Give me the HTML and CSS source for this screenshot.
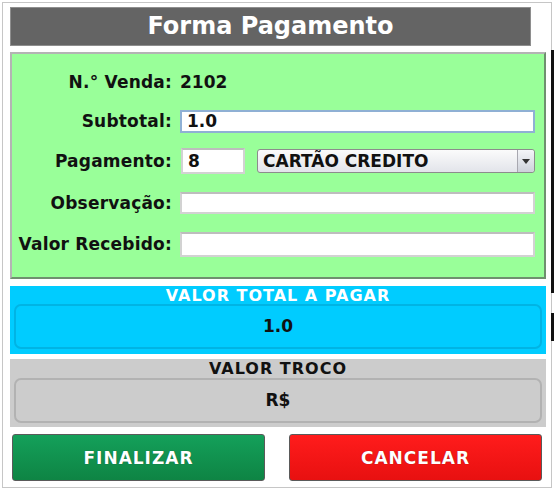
FILE: index.html
```html
<!DOCTYPE html>
<html lang="pt">
<head>
<meta charset="utf-8">
<title>Forma Pagamento</title>
<link rel="stylesheet" href="styles.css">
</head>
<body>
<div class="backdrop">
  <div class="behind behind-a"></div>
  <div class="behind behind-b"></div>
</div>
<div class="window">
  <div class="header">Forma Pagamento</div>

  <div class="form-panel">
    <div class="row">
      <span class="label">N.° Venda:</span>
      <span class="value">2102</span>
    </div>
    <div class="row">
      <span class="label">Subtotal:</span>
      <div class="field field-focus">1.0</div>
    </div>
    <div class="row">
      <span class="label">Pagamento:</span>
      <div class="field field-short">8</div>
      <div class="select">
        <span class="select-text">CARTÃO CREDITO</span>
        <span class="select-arrow">
          <svg width="8" height="5" viewBox="0 0 8 5"><path d="M0 0 L8 0 L4 5 Z" fill="#333"/></svg>
        </span>
      </div>
    </div>
    <div class="row">
      <span class="label">Observação:</span>
      <div class="field field-thin"></div>
    </div>
    <div class="row">
      <span class="label">Valor Recebido:</span>
      <div class="field"></div>
    </div>
  </div>

  <div class="total-panel total-blue">
    <div class="total-title">VALOR TOTAL A PAGAR</div>
    <div class="total-box">1.0</div>
  </div>

  <div class="total-panel total-gray">
    <div class="total-title">VALOR TROCO</div>
    <div class="total-box">R$</div>
  </div>

  <div class="actions">
    <button class="btn btn-ok">FINALIZAR</button>
    <button class="btn btn-cancel">CANCELAR</button>
  </div>
</div>
</body>
</html>
```

FILE: styles.css
```css
html, body {
  margin: 0;
  padding: 0;
  background: #ffffff;
}

body {
  width: 554px;
  height: 490px;
  overflow: hidden;
  font-family: "DejaVu Sans", "Liberation Sans", sans-serif;
  font-weight: bold;
  color: #111111;
  position: relative;
}

.backdrop {
  position: absolute;
  left: 551px;
  top: 0;
  width: 3px;
  height: 490px;
}

.behind {
  position: absolute;
  left: 0;
  width: 3px;
  background: #111111;
}

.behind-a { top: 50px; height: 243px; }
.behind-b { top: 313px; height: 28px; }

.window {
  margin: 2px 0 0 2px;
  width: 536px;
  height: 484px;
  border: 1px solid #c6c6c6;
  padding: 0 5px 0 7px;
  background: #ffffff;
  display: flex;
  flex-direction: column;
}

.header {
  margin-top: 4px;
  width: 519px;
  height: 37px;
  background: #646464;
  border: 1px solid #8e8e8e;
  color: #ffffff;
  font-size: 24px;
  line-height: 37px;
  text-align: center;
  flex: none;
}

.form-panel {
  margin-top: 6px;
  height: 207px;
  background: #99ff99;
  border-top: 2px solid #b4b4b4;
  border-left: 2px solid #b4b4b4;
  border-right: 2px solid #6f906f;
  border-bottom: 2px solid #6f906f;
  padding: 16px 9px 0 0;
  display: flex;
  flex-direction: column;
  gap: 15px;
  flex: none;
}

.row {
  display: flex;
  align-items: center;
  height: 24px;
  gap: 8px;
}

.row:nth-child(2) { margin-top: 0; }
.row:nth-child(3) { margin-top: 1px; }
.row:nth-child(4) { margin-top: 3px; }
.row:nth-child(5) { margin-top: 2px; }

.label {
  width: 160px;
  text-align: right;
  font-size: 17px;
  letter-spacing: 0.2px;
  flex: none;
}

.value {
  font-size: 17px;
}

.field {
  flex: 1;
  height: 21px;
  background: #ffffff;
  border: 2px solid #d2d2d2;
  border-top-color: #bdbdbd;
  font-size: 17px;
  line-height: 21px;
  padding-left: 5px;
  box-sizing: content-box;
}

.field-focus {
  border-color: #8fb0d4;
  height: 19px;
  line-height: 19px;
}

.field-short {
  flex: none;
  width: 55px;
  margin-left: 1px;
  height: 22px;
  line-height: 22px;
}

.field-thin {
  height: 18px;
}

.select {
  flex: 1;
  margin-left: 4px;
  height: 22px;
  border: 1px solid #8c8c8c;
  border-radius: 3px;
  background: linear-gradient(#fbfbfb, #e2e4ea);
  display: flex;
  align-items: center;
}

.select-text {
  flex: 1;
  padding-left: 5px;
  font-size: 17px;
  line-height: 22px;
}

.select-arrow {
  width: 16px;
  height: 22px;
  border-left: 1px solid #a8a8b0;
  background: linear-gradient(#f4f5f8, #cdd1da);
  border-radius: 0 3px 3px 0;
  display: flex;
  align-items: center;
  justify-content: center;
}

.total-panel {
  padding: 0 4px 5px 4px;
  display: flex;
  flex-direction: column;
  flex: none;
}

.total-blue {
  margin-top: 7px;
  background: #00ccff;
}

.total-gray {
  margin-top: 5px;
  background: #cccccc;
  padding-bottom: 4px;
}

.total-title {
  height: 18px;
  line-height: 19px;
  text-align: center;
  font-size: 16px;
  letter-spacing: 1px;
}

.total-blue .total-title {
  color: #ffffff;
}

.total-gray .total-title {
  height: 19px;
  line-height: 20px;
  color: #111111;
}

.total-box {
  height: 41px;
  border-radius: 7px;
  font-size: 17px;
  line-height: 41px;
  text-align: center;
}

.total-blue .total-box {
  border: 2px solid #00b4e4;
  background: #00ccff;
}

.total-gray .total-box {
  border: 2px solid #b2b2b2;
  background: #cccccc;
}

.actions {
  margin-top: 7px;
  padding: 0 2px;
  display: flex;
  gap: 24px;
  flex: none;
}

.btn {
  width: 253px;
  height: 47px;
  border: 1px solid #5a5a5a;
  border-radius: 3px;
  color: #ffffff;
  font-family: "DejaVu Sans", "Liberation Sans", sans-serif;
  font-weight: bold;
  font-size: 17px;
  letter-spacing: 1px;
  padding: 0;
  text-shadow: 0 0 1px rgba(0,0,0,0.4);
}

.btn-ok {
  background: linear-gradient(#14a05a, #0e8444);
}

.btn-cancel {
  background: linear-gradient(#ff1c1c, #e81010);
}
```
